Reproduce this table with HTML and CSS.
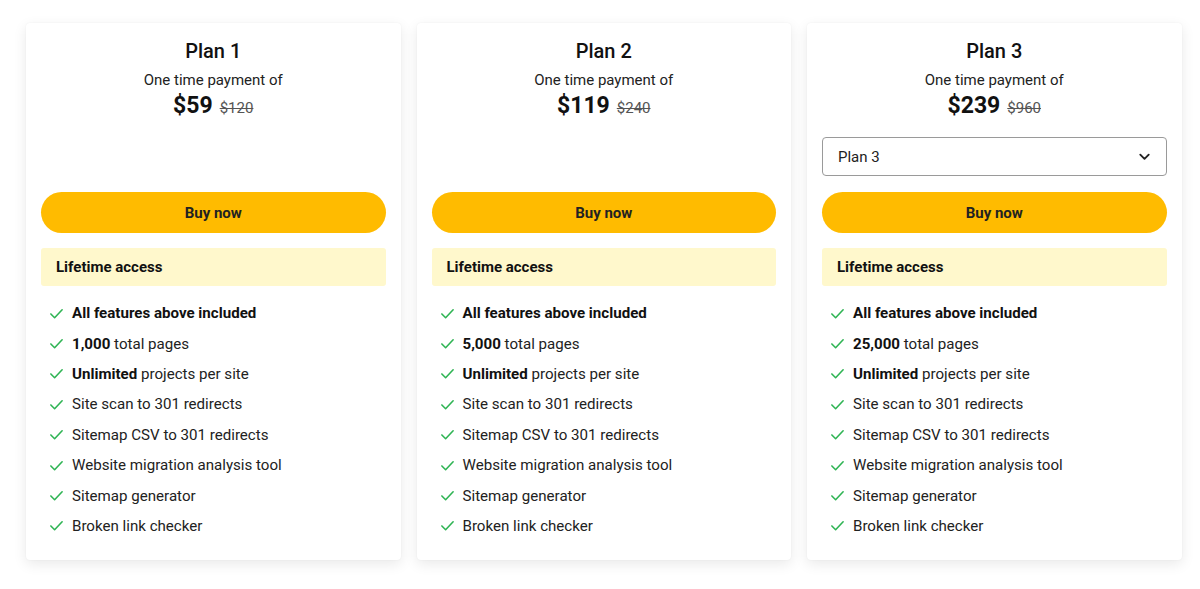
FILE: index.html
```html
<!DOCTYPE html>
<html>
<head>
<meta charset="utf-8">
<link rel="stylesheet" href="styles.css">
</head>
<body>
<div class="plans">
  <div class="card">
    <div class="title">Plan 1</div>
    <div class="sub">One time payment of</div>
    <div class="price"><span class="now">$59</span><span class="was">$120</span></div>
    <div class="select-slot"></div>
    <button class="buy">Buy now</button>
    <div class="band">Lifetime access</div>
    <ul class="feats">
      <li><svg viewBox="0 0 16 16"><path d="M2 8.5 L6 12.5 L14 4"/></svg><span><b>All features above included</b></span></li>
      <li><svg viewBox="0 0 16 16"><path d="M2 8.5 L6 12.5 L14 4"/></svg><span><b>1,000</b> total pages</span></li>
      <li><svg viewBox="0 0 16 16"><path d="M2 8.5 L6 12.5 L14 4"/></svg><span><b>Unlimited</b> projects per site</span></li>
      <li><svg viewBox="0 0 16 16"><path d="M2 8.5 L6 12.5 L14 4"/></svg><span>Site scan to 301 redirects</span></li>
      <li><svg viewBox="0 0 16 16"><path d="M2 8.5 L6 12.5 L14 4"/></svg><span>Sitemap CSV to 301 redirects</span></li>
      <li><svg viewBox="0 0 16 16"><path d="M2 8.5 L6 12.5 L14 4"/></svg><span>Website migration analysis tool</span></li>
      <li><svg viewBox="0 0 16 16"><path d="M2 8.5 L6 12.5 L14 4"/></svg><span>Sitemap generator</span></li>
      <li><svg viewBox="0 0 16 16"><path d="M2 8.5 L6 12.5 L14 4"/></svg><span>Broken link checker</span></li>
    </ul>
  </div>
  <div class="card">
    <div class="title">Plan 2</div>
    <div class="sub">One time payment of</div>
    <div class="price"><span class="now">$119</span><span class="was">$240</span></div>
    <div class="select-slot"></div>
    <button class="buy">Buy now</button>
    <div class="band">Lifetime access</div>
    <ul class="feats">
      <li><svg viewBox="0 0 16 16"><path d="M2 8.5 L6 12.5 L14 4"/></svg><span><b>All features above included</b></span></li>
      <li><svg viewBox="0 0 16 16"><path d="M2 8.5 L6 12.5 L14 4"/></svg><span><b>5,000</b> total pages</span></li>
      <li><svg viewBox="0 0 16 16"><path d="M2 8.5 L6 12.5 L14 4"/></svg><span><b>Unlimited</b> projects per site</span></li>
      <li><svg viewBox="0 0 16 16"><path d="M2 8.5 L6 12.5 L14 4"/></svg><span>Site scan to 301 redirects</span></li>
      <li><svg viewBox="0 0 16 16"><path d="M2 8.5 L6 12.5 L14 4"/></svg><span>Sitemap CSV to 301 redirects</span></li>
      <li><svg viewBox="0 0 16 16"><path d="M2 8.5 L6 12.5 L14 4"/></svg><span>Website migration analysis tool</span></li>
      <li><svg viewBox="0 0 16 16"><path d="M2 8.5 L6 12.5 L14 4"/></svg><span>Sitemap generator</span></li>
      <li><svg viewBox="0 0 16 16"><path d="M2 8.5 L6 12.5 L14 4"/></svg><span>Broken link checker</span></li>
    </ul>
  </div>
  <div class="card">
    <div class="title">Plan 3</div>
    <div class="sub">One time payment of</div>
    <div class="price"><span class="now">$239</span><span class="was">$960</span></div>
    <div class="select-slot">
      <div class="select"><span>Plan 3</span><svg viewBox="0 0 16 16"><path d="M3.5 6 L8 10.5 L12.5 6"/></svg></div>
    </div>
    <button class="buy">Buy now</button>
    <div class="band">Lifetime access</div>
    <ul class="feats">
      <li><svg viewBox="0 0 16 16"><path d="M2 8.5 L6 12.5 L14 4"/></svg><span><b>All features above included</b></span></li>
      <li><svg viewBox="0 0 16 16"><path d="M2 8.5 L6 12.5 L14 4"/></svg><span><b>25,000</b> total pages</span></li>
      <li><svg viewBox="0 0 16 16"><path d="M2 8.5 L6 12.5 L14 4"/></svg><span><b>Unlimited</b> projects per site</span></li>
      <li><svg viewBox="0 0 16 16"><path d="M2 8.5 L6 12.5 L14 4"/></svg><span>Site scan to 301 redirects</span></li>
      <li><svg viewBox="0 0 16 16"><path d="M2 8.5 L6 12.5 L14 4"/></svg><span>Sitemap CSV to 301 redirects</span></li>
      <li><svg viewBox="0 0 16 16"><path d="M2 8.5 L6 12.5 L14 4"/></svg><span>Website migration analysis tool</span></li>
      <li><svg viewBox="0 0 16 16"><path d="M2 8.5 L6 12.5 L14 4"/></svg><span>Sitemap generator</span></li>
      <li><svg viewBox="0 0 16 16"><path d="M2 8.5 L6 12.5 L14 4"/></svg><span>Broken link checker</span></li>
    </ul>
  </div>
</div>
</body>
</html>
```
FILE: styles.css
```css
* { box-sizing: border-box; }
html, body { margin: 0; padding: 0; background: #fff; }
body {
  font-family: Roboto, "Liberation Sans", Arial, sans-serif;
  color: #111;
  width: 1200px;
  height: 589px;
  overflow: hidden;
}
.plans {
  display: flex;
  gap: 16px;
  padding: 23px 0 0 26px;
}
.card {
  width: 374.5px;
  height: 537px;
  background: #fff;
  border-radius: 4px;
  box-shadow: 0 4px 14px rgba(0,0,0,0.09), 0 0 2px rgba(0,0,0,0.06);
  padding: 16px 15px 0;
  display: flex;
  flex-direction: column;
}
.title {
  text-align: center;
  font-size: 20px;
  font-weight: 500;
  line-height: 24px;
  color: #111;
}
.sub {
  text-align: center;
  font-size: 15px;
  line-height: 18px;
  margin-top: 8px;
  color: #222;
}
.price {
  text-align: center;
  line-height: 28px;
  margin-top: 3px;
  display: flex;
  justify-content: center;
  align-items: baseline;
  gap: 7px;
}
.price .now {
  font-size: 23px;
  font-weight: 700;
  color: #111;
}
.price .was {
  font-size: 15px;
  color: #555;
  text-decoration: line-through;
}
.select-slot {
  height: 39px;
  margin-top: 15px;
}
.select {
  height: 39px;
  border: 1px solid #9a9a9a;
  border-radius: 4px;
  display: flex;
  align-items: center;
  justify-content: space-between;
  padding: 0 14px 0 15px;
  font-size: 15px;
  color: #222;
}
.select svg {
  width: 15px;
  height: 15px;
  fill: none;
  stroke: #222;
  stroke-width: 2;
  stroke-linecap: round;
  stroke-linejoin: round;
}
.buy {
  margin-top: 16px;
  height: 41px;
  border: none;
  border-radius: 21px;
  background: #ffbb00;
  font-family: Roboto, "Liberation Sans", Arial, sans-serif;
  font-size: 15px;
  font-weight: 700;
  color: #222;
  width: 100%;
  padding: 0;
}
.band {
  margin-top: 15px;
  height: 38px;
  background: #fff8cc;
  border-radius: 3px;
  display: flex;
  align-items: center;
  padding-left: 15px;
  font-size: 15px;
  font-weight: 700;
  color: #111;
}
.feats {
  list-style: none;
  margin: 12px 0 0;
  padding: 0 0 0 8px;
}
.feats li {
  display: flex;
  align-items: center;
  height: 30.4px;
  font-size: 15.1px;
  color: #222;
}
.feats li b { font-weight: 700; color: #111; }
.feats svg {
  width: 15px;
  height: 15px;
  margin-right: 8px;
  fill: none;
  stroke: #2fb454;
  stroke-width: 1.7;
  stroke-linecap: round;
  stroke-linejoin: round;
  flex: none;
}
```
